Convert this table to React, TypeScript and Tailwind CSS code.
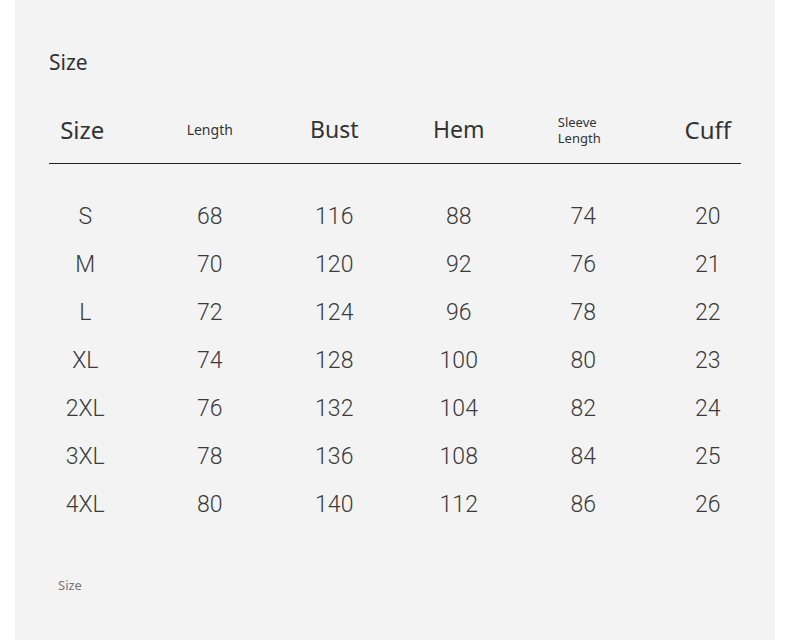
import React from 'react';

const rows = [
  ['S', '68', '116', '88', '74', '20'],
  ['M', '70', '120', '92', '76', '21'],
  ['L', '72', '124', '96', '78', '22'],
  ['XL', '74', '128', '100', '80', '23'],
  ['2XL', '76', '132', '104', '82', '24'],
  ['3XL', '78', '136', '108', '84', '25'],
  ['4XL', '80', '140', '112', '86', '26'],
];

export default function App() {
  return (
    <div className="w-[790px] h-[640px] bg-white overflow-hidden">
      <div className="ml-[15px] w-[760px] h-[640px] bg-[#f3f3f3] pt-[48px] text-[#333] font-['Noto_Sans',sans-serif]">
        <h2 className="pl-[34px] text-[21px] leading-[28px]">Size</h2>

        {/* header */}
        <div className="ml-[8px] mt-[20px] grid grid-cols-[repeat(6,124.5px)] h-[67px] items-center text-center">
          <div className="text-[24px] pr-[6px]">Size</div>
          <div className="text-[14px]">Length</div>
          <div className="text-[23px]">Bust</div>
          <div className="text-[23px]">Hem</div>
          <div className="flex justify-center pr-[8px]">
            <div className="text-left text-[13px] leading-[16px]">Sleeve<br />Length</div>
          </div>
          <div className="text-[24px]">Cuff</div>
        </div>
        <div className="mx-[34px] h-px bg-[#222]" />

        {/* rows */}
        <div className="ml-[8px] mt-[29px] font-['Roboto',sans-serif] font-light text-[23px] text-[#3a3a3a]">
          {rows.map((r) => (
            <div key={r[0]} className="grid grid-cols-[repeat(6,124.5px)] h-[48px] items-center text-center">
              {r.map((c, i) => (
                <div key={i}>{c}</div>
              ))}
            </div>
          ))}
        </div>

        <p className="pl-[43px] mt-[48px] text-[13px] leading-[16px] text-[#777]">Size</p>
      </div>
    </div>
  );
}
